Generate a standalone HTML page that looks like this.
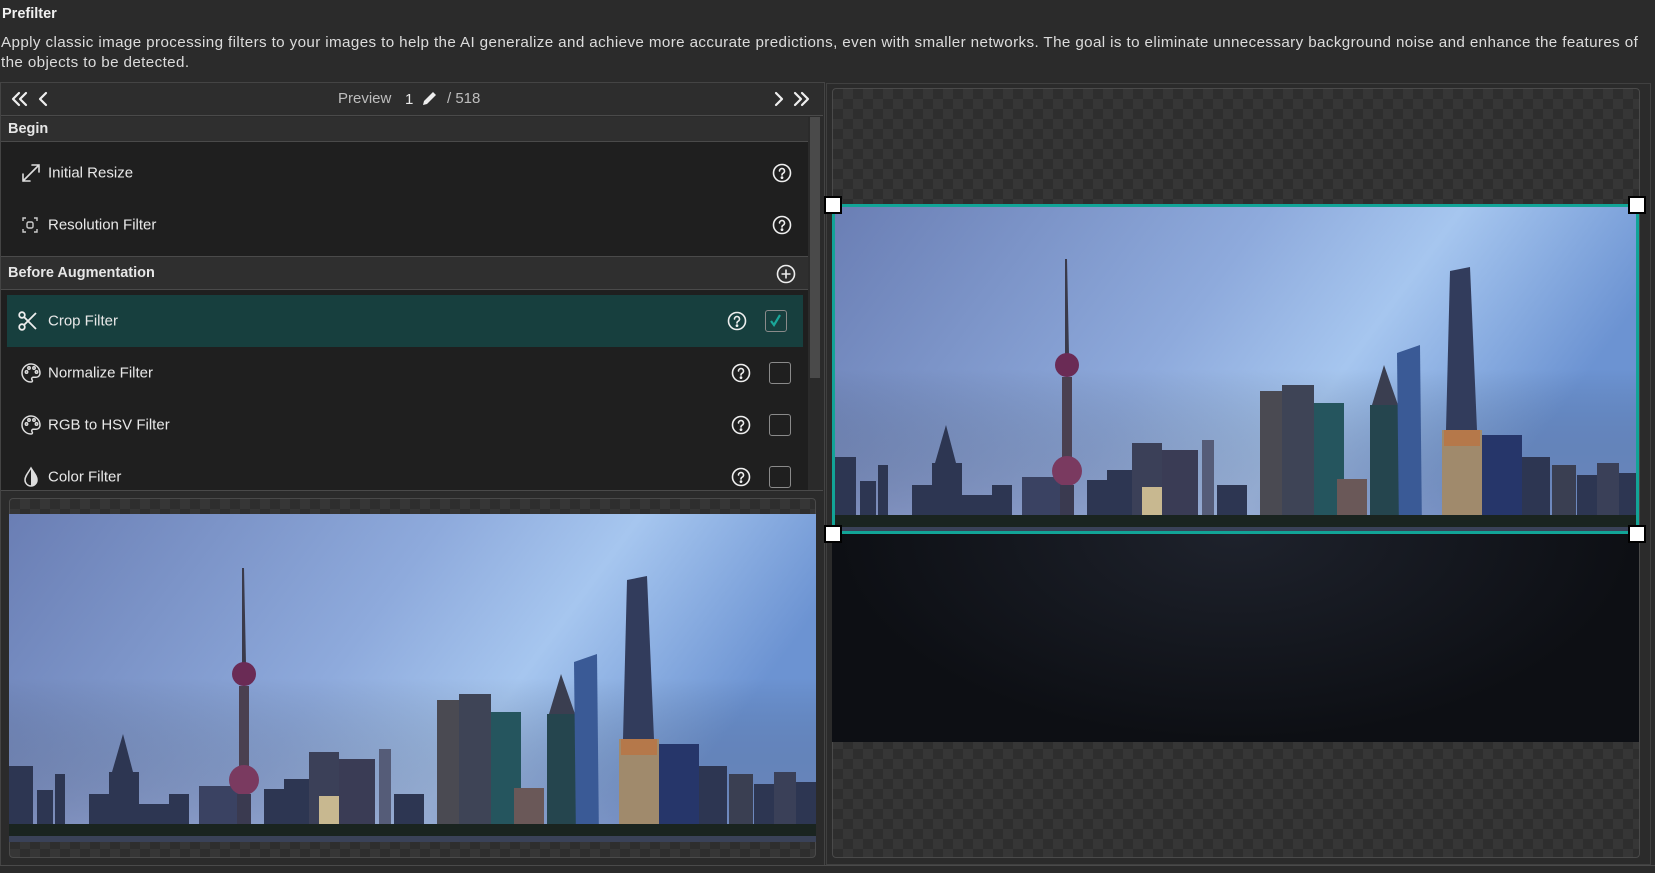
<!DOCTYPE html>
<html><head><meta charset="utf-8">
<style>
*{box-sizing:border-box;margin:0;padding:0}
body{width:1655px;height:873px;background:#2b2b2b;font-family:"Liberation Sans",sans-serif;color:#e6e6e6;position:relative;overflow:hidden}
.abs{position:absolute}
.checker{background-color:#2e2e2e;background-image:linear-gradient(45deg,#363636 25%,transparent 25%,transparent 75%,#363636 75%),linear-gradient(45deg,#363636 25%,transparent 25%,transparent 75%,#363636 75%);background-size:20px 20px;background-position:0 0,10px 10px}
.row{position:absolute;left:4px;width:804px;height:52px;font-size:15px;color:#e8e8e8}
.row .t{position:absolute;left:44px;top:50%;transform:translateY(-50%)}
.row svg.ic{position:absolute;left:16px;top:50%;transform:translateY(-50%)}
.hlp{position:absolute;top:50%;transform:translateY(-50%);width:20px;height:20px}
.cb{position:absolute;top:50%;transform:translateY(-50%);width:22px;height:22px;border:1.5px solid #8a8a8a;border-radius:3px}
.hdr{position:absolute;left:1px;width:807px;background:#2f2f2f;font-weight:bold;font-size:14.5px;color:#e6e6e6;border-bottom:1px solid #4a4a4a}
</style></head><body>
<div class="abs" style="left:2px;top:6px;font-weight:bold;font-size:14.5px;color:#f0f0f0">Prefilter</div>
<div class="abs" style="left:1px;top:33px;width:1650px;font-size:15.2px;letter-spacing:0.38px;line-height:20px;color:#dcdcdc;white-space:nowrap">Apply classic image processing filters to your images to help the AI generalize and achieve more accurate predictions, even with smaller networks. The goal is to eliminate unnecessary background noise and enhance the features of<br>the objects to be detected.</div>

<!-- left column -->
<div class="abs" style="left:0;top:82px;width:825px;height:784px;border:1px solid #444;border-bottom:1px solid #4a4a4a;background:#2b2b2b"></div>
<div class="abs" style="left:1px;top:83px;width:822px;height:33px;background:#2d2d2d;border-bottom:1px solid #4a4a4a"></div>
<svg class="abs" style="left:10px;top:90px" width="40" height="18" viewBox="0 0 40 18" fill="none" stroke="#eee" stroke-width="2.2" stroke-linecap="round" stroke-linejoin="round"><path d="M9 3 3 9 9 15M16 3 10 9 16 15M36 3 30 9 36 15"/></svg>
<div class="abs" style="left:338px;top:90px;font-size:15px;color:#bdbdbd">Preview</div>
<div class="abs" style="left:405px;top:91px;font-size:15px;color:#e8e8e8">1</div>
<svg class="abs" style="left:420px;top:89px" width="18" height="19" viewBox="0 0 18 19"><path d="M3 16 4 12 13 3 16 6 7 15Z" fill="#eee"/></svg>
<div class="abs" style="left:447px;top:90px;font-size:15px;color:#bdbdbd">/ 518</div>
<svg class="abs" style="left:770px;top:90px" width="45" height="18" viewBox="0 0 45 18" fill="none" stroke="#eee" stroke-width="2.2" stroke-linecap="round" stroke-linejoin="round"><path d="M6 3 12 9 6 15M25 3 31 9 25 15M32 3 38 9 32 15"/></svg>

<div class="abs" style="left:1px;top:117px;width:807px;height:373px;background:#1f1f1f"></div>
<div class="abs" style="left:810px;top:117px;width:10px;height:373px;background:#2a2a2a"></div>
<div class="abs" style="left:810px;top:117px;width:10px;height:261px;background:#4a4a4a"></div>

<div class="hdr" style="top:117px;height:25px"><span style="position:absolute;left:7px;top:4px">Begin</span></div>
<div class="row" style="top:147px">
<svg class="ic" width="22" height="22" viewBox="0 0 22 22" fill="none" stroke="#ddd" stroke-width="1.6" stroke-linecap="round"><path d="M3 19 19 3M12 3h7v7M3 12v7h7"/></svg>
<span class="t">Initial Resize</span>
<svg class="hlp" style="left:768px" viewBox="0 0 20 20" fill="none" stroke="#eee" stroke-width="1.6"><circle cx="10" cy="10" r="8.5"/><path d="M7.5 8a2.5 2.5 0 1 1 3.5 2.3c-.8.4-1 .9-1 1.7" stroke-linecap="round"/><circle cx="10" cy="14.6" r=".6" fill="#eee"/></svg>
</div>
<div class="row" style="top:199px">
<svg class="ic" width="20" height="20" viewBox="0 0 20 20" fill="none" stroke="#ccc" stroke-width="1.4"><path d="M3 6V3h3M14 3h3v3M17 14v3h-3M6 17H3v-3"/><rect x="7" y="7" width="6" height="6" rx="1.5"/></svg>
<span class="t">Resolution Filter</span>
<svg class="hlp" style="left:768px" viewBox="0 0 20 20" fill="none" stroke="#eee" stroke-width="1.6"><circle cx="10" cy="10" r="8.5"/><path d="M7.5 8a2.5 2.5 0 1 1 3.5 2.3c-.8.4-1 .9-1 1.7" stroke-linecap="round"/><circle cx="10" cy="14.6" r=".6" fill="#eee"/></svg>
</div>
<div class="hdr" style="top:256px;height:34px;border-top:1px solid #4a4a4a"><span style="position:absolute;left:7px;top:8px">Before Augmentation</span>
<svg style="position:absolute;left:775px;top:7px" width="20" height="20" viewBox="0 0 20 20" fill="none" stroke="#eee" stroke-width="1.6"><circle cx="10" cy="10" r="8.5"/><path d="M10 5.5v9M5.5 10h9"/></svg></div>

<div class="row" style="top:295px;left:7px;width:796px;background:#173f3e">
<svg class="ic" style="left:10px" width="22" height="22" viewBox="0 0 22 22" fill="none" stroke="#eee" stroke-width="1.8"><circle cx="5" cy="5" r="2.8"/><circle cx="5" cy="17" r="2.8"/><path d="M7 7 19 19M7 15 19 3"/></svg>
<span class="t" style="left:41px">Crop Filter</span>
<svg class="hlp" style="left:720px" viewBox="0 0 20 20" fill="none" stroke="#eee" stroke-width="1.6"><circle cx="10" cy="10" r="8.5"/><path d="M7.5 8a2.5 2.5 0 1 1 3.5 2.3c-.8.4-1 .9-1 1.7" stroke-linecap="round"/><circle cx="10" cy="14.6" r=".6" fill="#eee"/></svg>
<div class="cb" style="left:758px"><svg width="19" height="19" viewBox="0 0 19 19" style="position:absolute;left:0;top:0"><path d="M5 10 8 14 14 4" fill="none" stroke="#1aa79a" stroke-width="2.2"/></svg></div>
</div>
<div class="row" style="top:347px">
<svg class="ic" width="22" height="22" viewBox="0 0 22 22" fill="none" stroke="#ddd" stroke-width="1.5"><path d="M11 2a9 9 0 0 0 0 18c1.5 0 1.8-1.3 1-2.3-.8-1 0-2.4 1.3-2.4H16a4 4 0 0 0 4-4c0-5-4-9.3-9-9.3Z"/><circle cx="6.5" cy="10" r="1.2"/><circle cx="9" cy="6" r="1.2"/><circle cx="14" cy="6" r="1.2"/><circle cx="16.5" cy="10" r="1.2"/></svg>
<span class="t">Normalize Filter</span>
<svg class="hlp" style="left:727px" viewBox="0 0 20 20" fill="none" stroke="#eee" stroke-width="1.6"><circle cx="10" cy="10" r="8.5"/><path d="M7.5 8a2.5 2.5 0 1 1 3.5 2.3c-.8.4-1 .9-1 1.7" stroke-linecap="round"/><circle cx="10" cy="14.6" r=".6" fill="#eee"/></svg>
<div class="cb" style="left:765px"></div>
</div>
<div class="row" style="top:399px">
<svg class="ic" width="22" height="22" viewBox="0 0 22 22" fill="none" stroke="#ddd" stroke-width="1.5"><path d="M11 2a9 9 0 0 0 0 18c1.5 0 1.8-1.3 1-2.3-.8-1 0-2.4 1.3-2.4H16a4 4 0 0 0 4-4c0-5-4-9.3-9-9.3Z"/><circle cx="6.5" cy="10" r="1.2"/><circle cx="9" cy="6" r="1.2"/><circle cx="14" cy="6" r="1.2"/><circle cx="16.5" cy="10" r="1.2"/></svg>
<span class="t">RGB to HSV Filter</span>
<svg class="hlp" style="left:727px" viewBox="0 0 20 20" fill="none" stroke="#eee" stroke-width="1.6"><circle cx="10" cy="10" r="8.5"/><path d="M7.5 8a2.5 2.5 0 1 1 3.5 2.3c-.8.4-1 .9-1 1.7" stroke-linecap="round"/><circle cx="10" cy="14.6" r=".6" fill="#eee"/></svg>
<div class="cb" style="left:765px"></div>
</div>
<div class="row" style="top:451px">
<svg class="ic" width="22" height="22" viewBox="0 0 22 22"><path d="M11 2C8 7 5 10 5 14a6 6 0 0 0 12 0c0-4-3-7-6-12Z" fill="none" stroke="#ddd" stroke-width="1.5"/><path d="M11 2c3 5 6 8 6 12a6 6 0 0 1-6 6Z" fill="#ddd"/></svg>
<span class="t">Color Filter</span>
<svg class="hlp" style="left:727px" viewBox="0 0 20 20" fill="none" stroke="#eee" stroke-width="1.6"><circle cx="10" cy="10" r="8.5"/><path d="M7.5 8a2.5 2.5 0 1 1 3.5 2.3c-.8.4-1 .9-1 1.7" stroke-linecap="round"/><circle cx="10" cy="14.6" r=".6" fill="#eee"/></svg>
<div class="cb" style="left:765px"></div>
</div>
<div class="abs" style="left:1px;top:490px;width:822px;height:1px;background:#4a4a4a"></div>

<svg width="0" height="0" style="position:absolute">
<defs>
<linearGradient id="sky" x1="0" y1="0" x2="1" y2="0.3"><stop offset="0" stop-color="#6a7eb4"/><stop offset="0.5" stop-color="#8eaadc"/><stop offset="0.72" stop-color="#a6c6ef"/><stop offset="1" stop-color="#6c93d2"/></linearGradient>
<linearGradient id="skyv" x1="0" y1="0" x2="0" y2="1"><stop offset="0.5" stop-color="#000" stop-opacity="0"/><stop offset="1" stop-color="#8a8cb4" stop-opacity="0.4"/></linearGradient>
<g id="scene">
<rect width="807" height="328" fill="url(#sky)"/>
<rect width="807" height="328" fill="url(#skyv)"/>
<g fill="#2d3652">
<rect x="0" y="252" width="24" height="76"/><rect x="28" y="276" width="16" height="52"/><rect x="46" y="260" width="10" height="68"/><path d="M103 258 114 220 124 258Z"/><rect x="100" y="258" width="30" height="70"/>
<rect x="80" y="280" width="20" height="48"/><rect x="130" y="290" width="30" height="38"/><rect x="160" y="280" width="20" height="48"/>
<rect x="190" y="272" width="40" height="56" fill="#3a4262"/>
<path d="M233 54 235 54 237 150 233 150Z" fill="#3a3a4a"/>
<circle cx="235" cy="160" r="12" fill="#6a2b55"/>
<rect x="230" y="172" width="10" height="92" fill="#4a4050"/>
<circle cx="235" cy="266" r="15" fill="#7a3a60"/>
<rect x="228" y="280" width="14" height="48" fill="#3a3a50"/>
<rect x="255" y="275" width="20" height="53"/><rect x="275" y="265" width="25" height="63"/><rect x="300" y="238" width="30" height="90" fill="#3b4058"/>
<rect x="310" y="282" width="40" height="46" fill="#c8b890"/>
<rect x="330" y="245" width="36" height="83" fill="#3a3c55"/><rect x="370" y="235" width="12" height="93" fill="#555c78"/>
<rect x="385" y="280" width="30" height="48"/><rect x="428" y="186" width="22" height="142" fill="#4a4a52"/><rect x="450" y="180" width="32" height="148" fill="#3e4456"/>
<rect x="482" y="198" width="30" height="130" fill="#25555e"/><rect x="505" y="274" width="30" height="54" fill="#6a5858"/>
<path d="M540 200 552 160 566 200Z" fill="#3a3e50"/><rect x="538" y="200" width="30" height="128" fill="#25454e"/>
<path d="M565 148 588 140 590 328 567 328Z" fill="#3a5a96"/>
<path d="M618 66 638 62 645 225 614 225Z" fill="#323c5c"/>
<rect x="610" y="225" width="40" height="103" fill="#a08a6c"/><rect x="612" y="225" width="36" height="16" fill="#b5784a"/>
<rect x="650" y="230" width="40" height="98" fill="#26366a"/><rect x="690" y="252" width="28" height="76"/><rect x="720" y="260" width="24" height="68" fill="#3a3f52"/><rect x="745" y="270" width="20" height="58"/><rect x="765" y="258" width="22" height="70" fill="#3a4058"/><rect x="787" y="268" width="20" height="60"/>
</g>
<rect x="0" y="310" width="807" height="18" fill="#1a2420"/>
<rect x="0" y="322" width="807" height="6" fill="#3a4258"/>
</g>
</defs></svg>

<!-- bottom-left preview -->
<div class="abs checker" style="left:9px;top:498px;width:807px;height:360px;border:1px solid #4a4a4a;border-radius:4px"></div>
<svg class="abs" style="left:9px;top:514px" width="807" height="328"><use href="#scene"/></svg>
<div class="abs" style="left:0;top:865px;width:1655px;height:1px;background:#4a4a4a"></div>

<!-- right panel -->
<div class="abs" style="left:826px;top:83px;width:825px;height:782px;background:#2b2b2b;border:1px solid #404040"></div>
<div class="abs checker" style="left:832px;top:88px;width:808px;height:770px;border:1px solid #4a4a4a;border-radius:4px"></div>
<div class="abs" style="left:832px;top:205px;width:807px;height:537px;background:linear-gradient(#12151c,#0c0e12)"></div>
<div class="abs" style="left:832px;top:533px;width:807px;height:209px;background:radial-gradient(ellipse at 50% 0%,#1e222c,#0d0f14 70%)"></div>
<svg class="abs" style="left:832px;top:205px" width="807" height="328"><use href="#scene"/></svg>
<div class="abs" style="left:832px;top:204px;width:807px;height:330px;border:3px solid #12a497"></div>
<div class="abs" style="left:824px;top:196px;width:18px;height:18px;background:#fff;border:2px solid #000"></div>
<div class="abs" style="left:1628px;top:196px;width:18px;height:18px;background:#fff;border:2px solid #000"></div>
<div class="abs" style="left:824px;top:525px;width:18px;height:18px;background:#fff;border:2px solid #000"></div>
<div class="abs" style="left:1628px;top:525px;width:18px;height:18px;background:#fff;border:2px solid #000"></div>
</body></html>
